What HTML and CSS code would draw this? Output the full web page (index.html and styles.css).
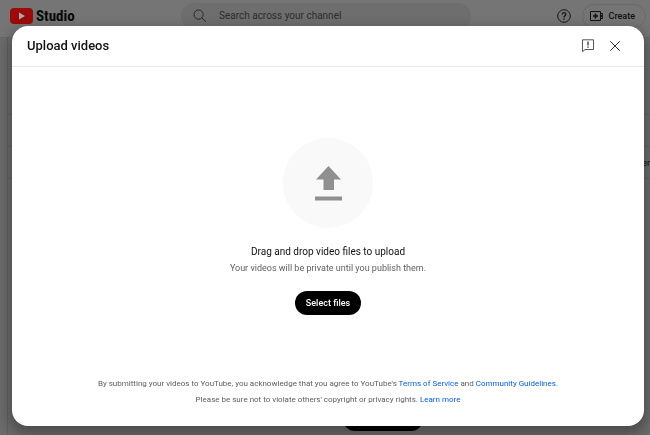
FILE: index.html
```html
<!DOCTYPE html>
<html lang="en">
<head>
<meta charset="utf-8">
<title>Upload videos - YouTube Studio</title>
<link rel="stylesheet" href="styles.css">
</head>
<body>
<div class="app">
  <header class="topbar">
    <a class="brand" href="#" aria-label="YouTube Studio">
      <svg class="brand-mark" viewBox="0 0 23 16" aria-hidden="true"><rect width="23" height="16" rx="4" fill="#9c0b0b"/><path d="M9 4.600v6.800L15 8z" fill="#aaa"/></svg>
      <span class="brand-name">Studio</span>
    </a>
    <label class="search">
      <svg class="search-icon" viewBox="0 0 14 14" fill="none" stroke="#292929" aria-hidden="true"><circle cx="5.600" cy="5.600" r="4.600"/><path d="M9 9l4 4"/></svg>
      <input type="search" placeholder="Search across your channel" aria-label="Search across your channel">
    </label>
    <div class="actions">
      <button class="icon-button" type="button" aria-label="Help">
        <svg class="help-icon" viewBox="0 0 14 14" fill="none" stroke="#151515" aria-hidden="true"><circle cx="7" cy="7" r="6.300"/><path d="M5.200 5.600C5.200 3 8.900 3.200 8.800 5.300 8.800 6.700 7 6.700 7 8.400M7 9.500v1.300" stroke-width="1.300"/></svg>
      </button>
      <button class="create" type="button">
        <svg class="create-icon" viewBox="0 0 14 10" fill="none" stroke="#111" aria-hidden="true"><path d="M.5.5h10v9H.5zM10.500 2.500h2v2h-2M10.500 5.500h2v2h-2"/><path d="M5.500 2.500v5M3 5h5" stroke-width="1.500"/></svg>
        Create
      </button>
    </div>
  </header>
  <div class="workspace">
    <nav class="sidebar" aria-label="Channel"></nav>
    <main class="content">
      <div class="list-head"></div>
      <div class="list-columns"></div>
      <div class="list-row">er</div>
      <button class="page-button" type="button" aria-label="Upload videos"></button>
    </main>
  </div>
</div>

<section class="dialog" role="dialog" aria-labelledby="dialog-title">
  <header class="dialog-header">
    <h1 id="dialog-title">Upload videos</h1>
    <button class="icon-button" type="button" aria-label="Send feedback">
      <svg class="feedback-icon" viewBox="0 0 12 14" fill="none" stroke="#555" aria-hidden="true"><path d="M.5 12.800V.8h11v9.700H3z"/><path d="M6 2.500v4M6 7.500v1.300" stroke="#222" stroke-width="1.200"/></svg>
    </button>
    <button class="icon-button" type="button" aria-label="Close">
      <svg class="close-icon" viewBox="0 0 12 12" fill="none" stroke="#333" aria-hidden="true"><path d="M1.200 1.200l9.600 9.600M10.800 1.200l-9.600 9.600"/></svg>
    </button>
  </header>
  <div class="drop-area">
    <div class="upload-badge">
      <svg class="upload-icon" viewBox="0 0 27 35" fill="#909090" aria-hidden="true"><path d="M13.500 0L26 13.500h-7V24H8.500V13.500H1zM0 30.500h27v4H0z"/></svg>
    </div>
    <h2>Drag and drop video files to upload</h2>
    <p class="privacy">Your videos will be private until you publish them.</p>
    <button class="select-files" type="button">Select files</button>
  </div>
  <footer class="legal">
    <p>By submitting your videos to YouTube, you acknowledge that you agree to YouTube's <a href="#">Terms of Service</a> and <a href="#">Community Guidelines</a>.</p>
    <p>Please be sure not to violate others' copyright or privacy rights. <a href="#">Learn more</a></p>
  </footer>
</section>
</body>
</html>
```
FILE: styles.css
```css
* { box-sizing: border-box; }

body {
  margin: 0;
  font-family: Roboto, "Liberation Sans", sans-serif;
  background: #6c6c6c;
  color: #111;
}

h1, h2, p { margin: 0; }
a { color: #065fd4; text-decoration: none; }
button { font: inherit; color: inherit; border: 0; padding: 0; background: none; }
svg { display: block; flex: none; }

.app {
  height: 100vh;
  overflow: hidden;
  display: flex;
  flex-direction: column;
}

.topbar {
  flex: none;
  height: 38px;
  padding: 0 4px 6px 10px;
  display: grid;
  grid-template-columns: 171px minmax(0, 290px) 1fr;
  align-items: center;
  background: #757575;
  border-bottom: 1px solid #686868;
}

.brand { display: flex; align-items: center; gap: 3px; color: #090909; }
.brand-mark { width: 23px; height: 16px; }
.brand-name {
  font: bold 15px/16px "Liberation Sans Narrow", "Roboto Condensed", Roboto, sans-serif;
}

.search {
  height: 26px;
  padding: 0 12px;
  display: flex;
  align-items: center;
  gap: 12px;
  border-radius: 13px;
  background: #6e6e6e;
}
.search-icon { width: 14px; height: 14px; }
.search input {
  flex: 1;
  min-width: 0;
  padding: 0;
  border: 0;
  outline: 0;
  background: none;
  font: 10px/14px Roboto, sans-serif;
}
.search input::placeholder { color: #2d2d2d; opacity: 1; }

.actions { display: flex; align-items: center; justify-content: flex-end; gap: 11px; }
.icon-button { flex: none; display: grid; place-items: center; }
.help-icon { width: 14px; height: 14px; }
.create {
  height: 24px;
  padding: 0 10px 0 7px;
  display: flex;
  align-items: center;
  gap: 5px;
  border: 1px solid #696969;
  border-radius: 12px;
  font-size: 9px;
  font-weight: 500;
}
.create-icon { width: 14px; height: 10px; }

.workspace { flex: 1; display: flex; min-height: 0; }
.sidebar { width: 8px; border-right: 1px solid #606060; }
.content {
  flex: 1;
  display: flex;
  flex-direction: column;
}
.list-head { height: 77px; border-bottom: 1px solid #646464; }
.list-columns { height: 32px; border-bottom: 1px solid #646464; }
.list-row {
  height: 32px;
  border-bottom: 1px solid #646464;
  font-size: 9px;
  line-height: 32px;
  text-align: right;
}
.page-button {
  width: 80px;
  height: 24px;
  margin: auto 227px 4px auto;
  border-radius: 12px;
  background: #000;
}

.dialog {
  position: fixed;
  inset: 26px 6px 9px 12px;
  display: flex;
  flex-direction: column;
  border-radius: 16px;
  background: #fff;
  box-shadow: 0 6px 14px 3px rgba(0, 0, 0, .3);
}
.dialog-header {
  height: 41px;
  padding: 0 23px 0 15px;
  display: flex;
  align-items: center;
  gap: 15px;
  border-bottom: 1px solid #e8e8e8;
}
.dialog-header h1 { flex: 1; font-size: 13px; line-height: 18px; font-weight: 500; }
.feedback-icon { width: 12px; height: 14px; }
.close-icon { width: 12px; height: 12px; }

.drop-area {
  flex: 1;
  padding-top: 10px;
  display: flex;
  flex-direction: column;
  align-items: center;
  justify-content: center;
}
.upload-badge {
  width: 90px;
  height: 90px;
  margin-bottom: 16px;
  display: grid;
  place-items: center;
  border-radius: 50%;
  background: #f9f9f9;
}
.upload-icon { width: 27px; height: 35px; }
.drop-area h2 { font-size: 10px; line-height: 16px; font-weight: 400; }
.privacy { font-size: 9px; line-height: 16px; color: #606060; }
.select-files {
  height: 24px;
  margin-top: 15px;
  padding: 0 11px;
  border-radius: 12px;
  background: #000;
  color: #fff;
  font-size: 9px;
  font-weight: 500;
}

.legal {
  padding: 0 16px 18px;
  text-align: center;
  font-size: 8px;
  line-height: 16px;
  color: #606060;
}
```
